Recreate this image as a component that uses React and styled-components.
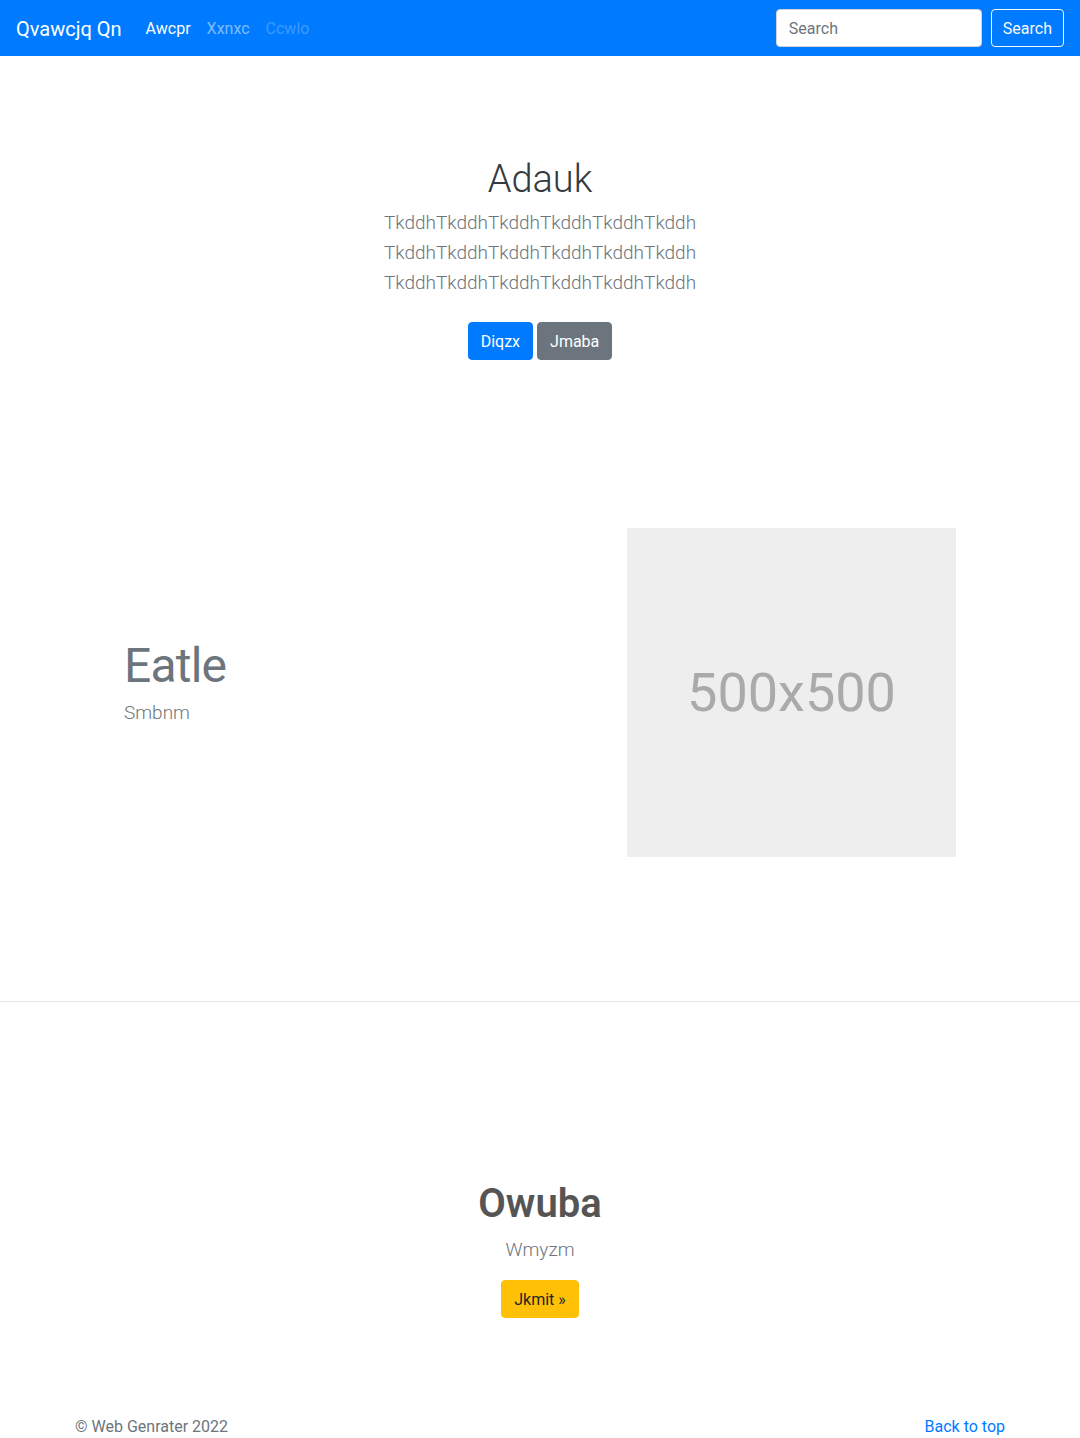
import React from "react";
import styled, { createGlobalStyle } from "styled-components";

const GlobalStyle = createGlobalStyle`
  * { box-sizing: border-box; }
  body {
    margin: 0;
    font-family: Roboto, "Liberation Sans", Arial, sans-serif;
    font-size: 16px;
    line-height: 1.5;
    color: #212529;
    background: #fff;
  }
`;

const Navbar = styled.nav`
  height: 56px;
  background: #007bff;
  display: flex;
  align-items: center;
  padding: 1px 16px 0;
`;

const Brand = styled.a`
  font-size: 20px;
  color: #fff;
  text-decoration: none;
  margin-right: 16px;
  line-height: 30px;
`;

const NavLinks = styled.div`
  display: flex;
  flex: 1;
`;

const NavLink = styled.a`
  padding: 8px;
  color: ${(p) =>
    p.$state === "active"
      ? "#fff"
      : p.$state === "disabled"
      ? "rgba(255,255,255,.25)"
      : "rgba(255,255,255,.5)"};
  text-decoration: none;
  font-size: 16px;
`;

const SearchForm = styled.form`
  display: flex;
  align-items: center;
  gap: 9px;
  margin-top: -1px;
`;

const SearchInput = styled.input`
  width: 206px;
  height: 38px;
  padding: 6px 12px;
  font: inherit;
  font-size: 16px;
  border: 1px solid #ced4da;
  border-radius: 4px;
  color: #495057;
  &::placeholder { color: #6c757d; }
`;

const Button = styled.a`
  display: inline-block;
  height: 38px;
  line-height: 37px;
  padding: 0 ${(p) => p.$px || 12}px;
  font-family: inherit;
  font-size: 16px;
  border-radius: 4px;
  border: 1px solid ${(p) => p.$border || p.$bg};
  background: ${(p) => p.$bg};
  color: ${(p) => p.$color || "#fff"};
  text-decoration: none;
`;

const Jumbotron = styled.section`
  padding: 96px 0;
  text-align: center;
`;

const HeroTitle = styled.h1`
  margin: 3px 0 5px;
  font-size: 38px;
  font-weight: 300;
  line-height: 48px;
  color: #343a40;
`;

const Lead = styled.p`
  margin: 0 0 ${(p) => p.$mb || 16}px;
  font-size: 19px;
  font-weight: 300;
  line-height: 30px;
  color: #6c757d;
`;

const ButtonRow = styled.div`
  margin: 0 0 16px;
  padding: 8px 0;
  display: flex;
  justify-content: center;
  gap: 4px;
`;

const Featurette = styled.section`
  width: 960px;
  margin: 0 auto;
  padding: 48px 64px 144px 64px;
  display: grid;
  grid-template-columns: 1fr 329px;
  align-items: center;
`;

const FeatureHeading = styled.h2`
  margin: 0 0 7px;
  font-size: 48px;
  font-weight: 400;
  line-height: 50px;
  letter-spacing: -0.8px;
  color: #6c757d;
`;

const Placeholder = styled.div`
  width: 329px;
  height: 329px;
  background: #eee;
  color: #aaa;
  font-size: 54px;
  display: flex;
  align-items: center;
  justify-content: center;
`;

const Divider = styled.hr`
  margin: 0;
  border: 0;
  border-top: 1px solid #e5e5e5;
`;

const Marketing = styled.section`
  padding: 178px 0 48px;
  text-align: center;
`;

const MarketingHeading = styled.h2`
  margin: 0 0 7px;
  font-size: 40px;
  font-weight: 600;
  line-height: 48px;
  color: #555;
`;

const Footer = styled.footer`
  width: 960px;
  margin: 0 auto;
  padding: 49px 15px 48px;
  display: flex;
  justify-content: space-between;
  color: #6c757d;
`;

const FooterLink = styled.a`
  color: #007bff;
  text-decoration: none;
`;

export default function App() {
  return (
    <>
      <GlobalStyle />
      <Navbar>
        <Brand href="#">Qvawcjq Qn</Brand>
        <NavLinks>
          <NavLink href="#" $state="active">Awcpr</NavLink>
          <NavLink href="#">Xxnxc</NavLink>
          <NavLink $state="disabled">Ccwlo</NavLink>
        </NavLinks>
        <SearchForm onSubmit={(e) => e.preventDefault()}>
          <SearchInput type="search" placeholder="Search" />
          <Button as="button" type="submit" $px={11} $bg="transparent" $border="#f8f9fa" $color="#f8f9fa">
            Search
          </Button>
        </SearchForm>
      </Navbar>

      <Jumbotron>
        <HeroTitle>Adauk</HeroTitle>
        <Lead>
          TkddhTkddhTkddhTkddhTkddhTkddh
          <br />
          TkddhTkddhTkddhTkddhTkddhTkddh
          <br />
          TkddhTkddhTkddhTkddhTkddhTkddh
        </Lead>
        <ButtonRow>
          <Button href="#" $bg="#007bff">Diqzx</Button>
          <Button href="#" $bg="#6c757d">Jmaba</Button>
        </ButtonRow>
      </Jumbotron>

      <Featurette>
        <div>
          <FeatureHeading>Eatle</FeatureHeading>
          <Lead>Smbnm</Lead>
        </div>
        <Placeholder>500x500</Placeholder>
      </Featurette>

      <Divider />

      <Marketing>
        <MarketingHeading>Owuba</MarketingHeading>
        <Lead $mb={15}>Wmyzm</Lead>
        <Button href="#" $bg="#ffc107" $color="#212529">Jkmit »</Button>
      </Marketing>

      <Footer>
        <span>© Web Genrater 2022</span>
        <FooterLink href="#">Back to top</FooterLink>
      </Footer>
    </>
  );
}
